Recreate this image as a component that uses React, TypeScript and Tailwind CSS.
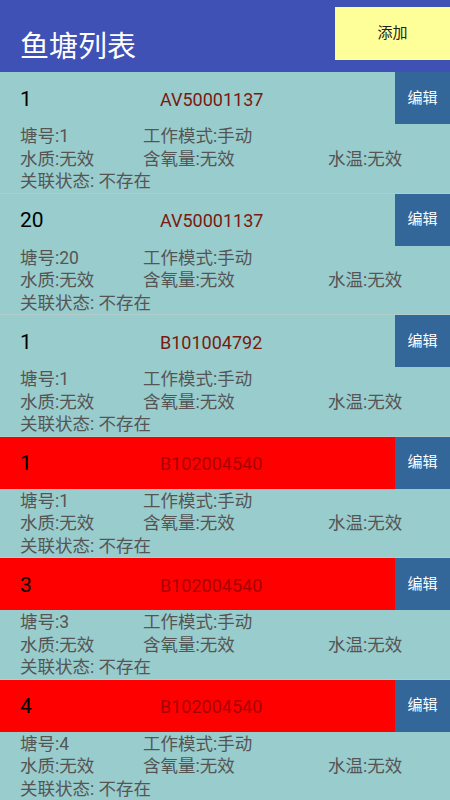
const ponds = [
  { no: "1", code: "AV50001137", alarm: false },
  { no: "20", code: "AV50001137", alarm: false },
  { no: "1", code: "B101004792", alarm: false },
  { no: "1", code: "B102004540", alarm: true },
  { no: "3", code: "B102004540", alarm: true },
  { no: "4", code: "B102004540", alarm: true },
];

function PondItem({ no, code, alarm }: { no: string; code: string; alarm: boolean }) {
  return (
    <div className="flex h-[121.5px] flex-col border-b border-[#b3cccc] bg-[#99cccc]">
      <div className={`flex h-[53px] items-center ${alarm ? "bg-[#ff0000]" : ""}`}>
        <div className="w-[140px] pl-5 pt-[3px] text-[21px] text-black">{no}</div>
        <div className={`flex-1 pl-5 pt-[2px] text-[18px] ${alarm ? "text-[#a80000]" : "text-[#7a1a10]"}`}>{code}</div>
        <div className="flex h-full w-[55px] items-center justify-center bg-[#336699] text-[15px] text-white">
          编辑
        </div>
      </div>
      <div className="flex flex-col pl-5 pt-[1px] text-[17.5px] leading-[22.5px] text-[#555]">
        <div className="flex">
          <span className="w-[123px]">塘号:{no}</span>
          <span>工作模式:手动</span>
        </div>
        <div className="flex">
          <span className="w-[123px]">水质:无效</span>
          <span className="w-[185px]">含氧量:无效</span>
          <span>水温:无效</span>
        </div>
        <div>关联状态: 不存在</div>
      </div>
    </div>
  );
}

export default function App() {
  return (
    <div
      className="h-[800px] w-[450px] overflow-hidden bg-[#99cccc]"
      style={{ fontFamily: "Roboto, 'Noto Sans CJK SC', sans-serif" }}
    >
      <div className="flex h-[72px] items-start justify-between bg-[#3f51b5]">
        <h1 className="pl-5 pt-[27px] text-[29px] leading-[40px] text-white">鱼塘列表</h1>
        <button className="mt-[7px] h-[53px] w-[115px] bg-[#ffff99] text-[15px] text-[#222]">添加</button>
      </div>
      {ponds.map((p, i) => (
        <PondItem key={i} {...p} />
      ))}
    </div>
  );
}
